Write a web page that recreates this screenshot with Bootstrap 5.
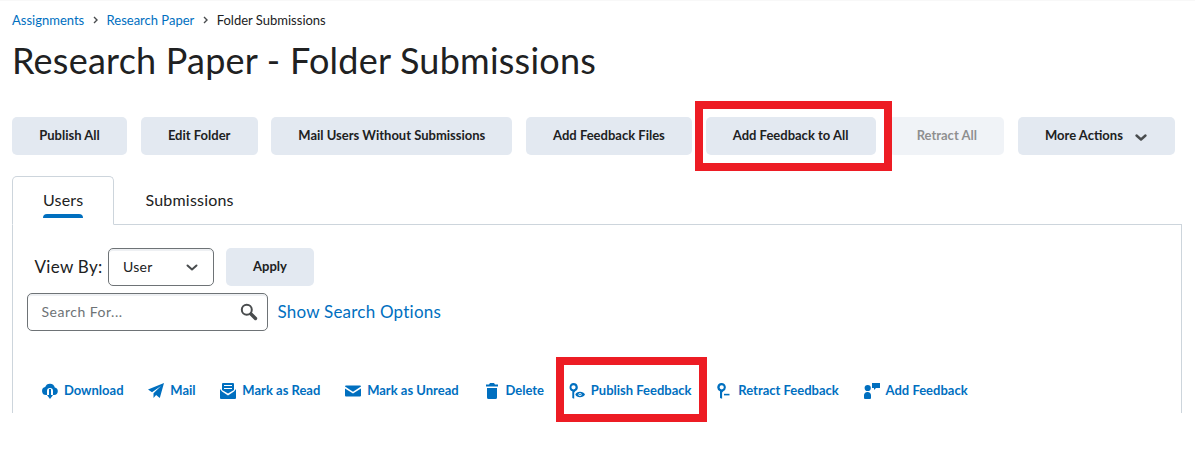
<!DOCTYPE html>
<html lang="en">
<head>
<meta charset="utf-8">
<meta name="viewport" content="width=device-width, initial-scale=1">
<title>Research Paper - Folder Submissions</title>
<link href="https://cdn.jsdelivr.net/npm/bootstrap@5.3.0/dist/css/bootstrap.min.css" rel="stylesheet">
<style>
body{font-family:Lato,"Liberation Sans",sans-serif;color:#202122;background:#fff;font-size:16px}
a{color:#006fbf;text-decoration:none}
.page{padding:0 13px 0 12px;border-top:1px solid #f8f8f8;min-height:456px}
.crumbs{height:38px;font-size:13px;line-height:38px;white-space:nowrap}
.crumbs svg{margin:0 7.7px}
.title{font-size:36px;line-height:42px;font-weight:400;letter-spacing:.23px;white-space:nowrap}
.toolbar{margin-top:36px;width:1163px}
.btn-soft{--bs-btn-bg:#e3e9f1;--bs-btn-color:#202122;--bs-btn-hover-bg:#d3d9e3;--bs-btn-border-width:0;--bs-btn-border-radius:5px;--bs-btn-padding-y:0;--bs-btn-padding-x:0;--bs-btn-font-size:13px;--bs-btn-font-weight:700;--bs-btn-line-height:34px;--bs-btn-disabled-bg:#e3e9f1;--bs-btn-disabled-color:#202122;--bs-btn-disabled-opacity:.5;height:38px;padding-bottom:3px;white-space:nowrap}
.w-pub{width:115px}.w-edit{width:117px}.w-mail{width:241px}.w-files{width:166px}.w-all{width:170px}.w-ret{width:115px}.w-more{width:157px;padding-left:2px}.w-apply{width:88px;margin-left:12px}
.w-more svg{margin:5px 0 0 9px}
.ring{position:absolute;border:8px solid #ed1c24;pointer-events:none;z-index:2}
.ring-all{left:-11px;right:-16px;top:-16px;bottom:-16px}
.ring-publish{left:-12.500px;right:-15px;top:-24px;bottom:-21px}
.tabs{margin-top:21px;--bs-nav-tabs-border-color:#cdd5dc;--bs-nav-tabs-border-radius:5px;width:1170px}
.tabs .nav-link{height:49px;padding:0 30.500px;line-height:45px;color:#202122;letter-spacing:.2px}
.tabs .nav-link.active{color:#202122;border-color:#cdd5dc #cdd5dc #fff;width:102px;padding:0 30px}
.tabs .active span{display:inline-block;position:relative}
.tabs .active span::after{content:"";position:absolute;left:0;right:0;bottom:4px;height:4px;background:#006fbf;border-radius:4px 4px 0 0}
.panel{width:1170px;height:188px;border:solid #cdd5dc;border-width:0 1px;padding:23px 14px 0}
.field{border:1px solid #6e7376;border-radius:5px;height:38px;font-size:14px;box-shadow:inset 0 2px 0 #eef0f3;letter-spacing:.3px}
.field span{padding-bottom:2px}
.pick{width:106px;padding:0 15px 0 14px}
.find{width:241px;padding:0 9px 0 13.500px;color:#6e7376;letter-spacing:.5px}
.viewby{font-size:17px;margin-left:7.500px;width:73.500px;letter-spacing:.3px;white-space:nowrap}
.row-find{margin-top:7px}
.opts{font-size:17px;margin-left:9.500px;letter-spacing:.22px}
.actions{margin:50px 0 0 15px;gap:24.900px;font-size:13px;font-weight:700;line-height:20px;white-space:nowrap}
.actions a{display:flex;align-items:center;gap:6px;position:relative}
.actions b{font-weight:700;padding-bottom:1px;margin:-1px 0 0 -.1px}
.actions svg{fill:#006fbf;flex:none}
</style>
</head>
<body>
<main class="page">
<nav class="crumbs d-flex align-items-center">
<a href="#">Assignments</a><svg width="7" height="8" viewBox="0 0 7 8"><path d="M2 1l3 3-3 3" fill="none" stroke="#494c4e" stroke-width="1.4"/></svg><a href="#">Research Paper</a><svg width="7" height="8" viewBox="0 0 7 8"><path d="M2 1l3 3-3 3" fill="none" stroke="#494c4e" stroke-width="1.4"/></svg><span>Folder Submissions</span>
</nav>
<h1 class="title mb-0">Research Paper - Folder Submissions</h1>
<div class="toolbar d-flex justify-content-between">
<button class="btn btn-soft w-pub">Publish All</button>
<button class="btn btn-soft w-edit">Edit Folder</button>
<button class="btn btn-soft w-mail">Mail Users Without Submissions</button>
<button class="btn btn-soft w-files">Add Feedback Files</button>
<button class="btn btn-soft w-all position-relative">Add Feedback to All<span class="ring ring-all"></span></button>
<button class="btn btn-soft w-ret" disabled>Retract All</button>
<button class="btn btn-soft w-more d-flex align-items-center justify-content-center">More Actions<svg width="18" height="18" viewBox="0 0 18 18"><path d="M4.500 7.500l4.500 4 4.500-4" fill="none" stroke="#494c4e" stroke-width="2.400" stroke-linecap="round" stroke-linejoin="round"/></svg></button>
</div>
<ul class="nav nav-tabs tabs">
<li class="nav-item"><a class="nav-link active" href="#"><span>Users</span></a></li>
<li class="nav-item"><a class="nav-link" href="#">Submissions</a></li>
</ul>
<section class="panel">
<div class="d-flex align-items-center">
<label class="viewby">View By:</label>
<div class="field pick d-flex align-items-center justify-content-between"><span>User</span><svg width="12" height="8" viewBox="0 0 12 8"><path d="M1.500 2.500L6 6.500l4.500-4" fill="none" stroke="#494c4e" stroke-width="2" stroke-linecap="round" stroke-linejoin="round"/></svg></div>
<button class="btn btn-soft w-apply">Apply</button>
</div>
<div class="d-flex align-items-center row-find">
<div class="field find d-flex align-items-center justify-content-between"><span>Search For...</span><svg width="18" height="18" viewBox="0 0 18 18"><circle cx="6.800" cy="6.800" r="5" fill="none" stroke="#494c4e" stroke-width="2"/><path d="M11 11l4.500 4.500" stroke="#494c4e" stroke-width="3.400" stroke-linecap="round"/></svg></div>
<a class="opts" href="#">Show Search Options</a>
</div>
<div class="actions d-flex">
<a href="#"><svg width="16" height="16" viewBox="0 0 16 16"><path d="M5 12H4a4 4 0 0 1-.8-7.900A5 5 0 0 1 12.800 4.500 3.800 3.800 0 0 1 12.200 12H11V8a3 3 0 0 0-6 0z"/><path d="M7 6h2v6h2l-3 4-3-4h2z"/></svg><b>Download</b></a>
<a href="#"><svg width="16" height="16" viewBox="0 0 16 16"><path d="M16 0L0 6.500l4 2.700L13 3 5.500 10.200V15l2.600-3 3.700 3z"/></svg><b>Mail</b></a>
<a href="#"><svg width="16" height="16" viewBox="0 0 16 16"><path fill-rule="evenodd" d="M2 1a1 1 0 0 1 1-1h10a1 1 0 0 1 1 1v6l-6 3.500L2 7zM4 2v1h8V2zm0 3v1h8V5z"/><path d="M0 6l2 2.500 6 4 6-4L16 6v9a1 1 0 0 1-1 1H1a1 1 0 0 1-1-1z"/></svg><b>Mark as Read</b></a>
<a href="#"><svg width="16" height="16" viewBox="0 0 16 16"><path d="M1 2.500h14a1 1 0 0 1 1 1L8 8.700 0 3.500a1 1 0 0 1 1-1z"/><path d="M0 5.500l8 5 8-5v7a1 1 0 0 1-1 1H1a1 1 0 0 1-1-1z"/></svg><b>Mark as Unread</b></a>
<a href="#"><svg width="16" height="16" viewBox="0 0 16 16"><path d="M2 1.500h3L6 0h4l1 1.500h3V3.500H2zM3 5h10v9.500a1.500 1.500 0 0 1-1.500 1.500h-7A1.500 1.500 0 0 1 3 14.500z"/></svg><b>Delete</b></a>
<a href="#"><svg width="16" height="16" viewBox="0 0 16 16"><path fill-rule="evenodd" d="M4.500 0a4.300 4.300 0 0 1 2 8.100L5.200 9.500v6.300L3.300 15V8.300A4.300 4.300 0 0 1 4.500 0zm0 2.200a2 2 0 1 0 0 4.200 2 2 0 0 0 0-4.200z"/><path fill-rule="evenodd" d="M6.300 11.500Q7.500 8.700 11 8.700t5 2.800q-1.500 2.800-5 2.800t-4.700-2.800zm4.700-1.600a1.600 1.600 0 1 0 0 3.200 1.600 1.600 0 0 0 0-3.200z"/><circle cx="11" cy="11.500" r=".8"/></svg><b>Publish Feedback</b><span class="ring ring-publish"></span></a>
<a href="#"><svg width="16" height="16" viewBox="0 0 16 16"><path fill-rule="evenodd" d="M5.700 0a4.300 4.300 0 0 1 1.600 8.200L6.100 9.500v6.300L4 15V8.300A4.300 4.300 0 0 1 5.700 0zm0 2.200a2 2 0 1 0 0 4.200 2 2 0 0 0 0-4.200z"/><path d="M8 10.800h5.500v1.600H8z"/></svg><b>Retract Feedback</b></a>
<a href="#"><svg width="16" height="16" viewBox="0 0 16 16"><circle cx="3.700" cy="5" r="3.100"/><path d="M0 15v-2.500A3.300 3.300 0 0 1 3.500 9a3.300 3.300 0 0 1 3.500 3.500V15a1 1 0 0 1-1 1H1a1 1 0 0 1-1-1zM8 0h8v5h-4l-2 2V5H8z"/></svg><b>Add Feedback</b></a>
</div>
</section>
</main>
<script src="https://cdn.jsdelivr.net/npm/bootstrap@5.3.0/dist/js/bootstrap.bundle.min.js"></script>
</body>
</html>
